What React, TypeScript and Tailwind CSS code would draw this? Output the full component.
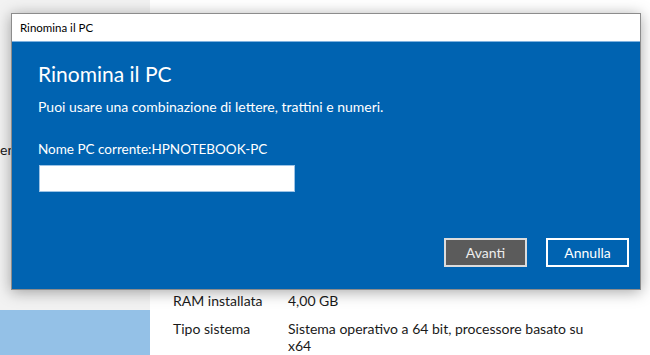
export default function App() {
  return (
    <div
      className="relative flex w-[650px] h-[355px] overflow-hidden bg-white text-[#1a1a1a]"
      style={{ fontFamily: 'Lato, "Open Sans", sans-serif' }}
    >
      {/* Settings sidebar */}
      <div className="flex w-[150px] shrink-0 flex-col bg-[#f2f2f2]">
        <div className="h-[140px]" />
        <div className="text-[14px] leading-[19px]">en</div>
        <div className="flex-1" />
        <div className="h-[45px] bg-[#94c1e7]" />
      </div>

      {/* Settings content */}
      <div className="flex flex-1 flex-col pl-[23px] pt-[292px] text-[14px] leading-[17px]">
        <div className="flex">
          <div className="w-[115px] shrink-0">RAM installata</div>
          <div>4,00 GB</div>
        </div>
        <div className="mt-[11px] flex">
          <div className="w-[115px] shrink-0">Tipo sistema</div>
          <div className="w-[310px]">Sistema operativo a 64 bit, processore basato su x64</div>
        </div>
      </div>

      {/* Dialog */}
      <div className="absolute left-[11px] top-[13px] flex h-[277px] w-[630px] flex-col border border-[#8c8c8c] shadow-[0_2px_14px_rgba(0,0,0,0.35)]">
        <div className="flex h-[27px] items-center bg-white pl-[8px] text-[11.5px] text-black">
          Rinomina il PC
        </div>
        <div className="h-[1px] bg-[#7fb2e0]" />
        <div className="flex flex-1 flex-col bg-[#0063b1] pl-[26px] pr-[11px] pt-[18px] text-white">
          <div className="text-[21px] font-normal leading-[28px]">Rinomina il PC</div>
          <div className="mt-[9px] text-[14px] leading-[19px]">
            Puoi usare una combinazione di lettere, trattini e numeri.
          </div>
          <div className="mt-[24px] text-[13.5px] leading-[19px]">Nome PC corrente:HPNOTEBOOK-PC</div>
          <input
            className="ml-[1px] mt-[6px] h-[27px] w-[256px] border border-[#9cc3e6] bg-white px-2 text-[14px] text-black outline-none"
            type="text"
          />
          <div className="mt-[46px] flex justify-end gap-[19px]">
            <button className="h-[29px] w-[83px] border-2 border-[#dcdcdc] bg-[#5b5b5b] text-[14px] text-[#ededed]">
              Avanti
            </button>
            <button className="h-[29px] w-[83px] border-2 border-white bg-[#0063b1] text-[14px] text-white">
              Annulla
            </button>
          </div>
        </div>
      </div>
    </div>
  );
}
